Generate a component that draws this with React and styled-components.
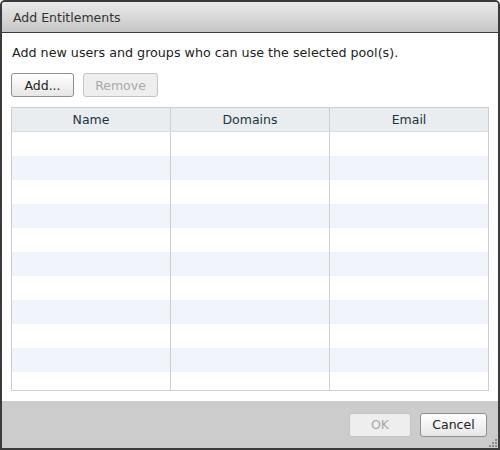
import React from "react"
import styled, { createGlobalStyle } from "styled-components"

const GlobalStyle = createGlobalStyle`
  html, body {
    margin: 0;
    padding: 0;
    background: #fff;
  }
  body {
    font-family: "DejaVu Sans", Verdana, sans-serif;
    font-size: 12px;
    color: #222;
  }
`

const columns = ["Name", "Domains", "Email"]
const rows = Array.from({ length: 11 })

const App = () => {
  return (
    <>
      <GlobalStyle />
      <Dialog>
        <TitleBar>Add Entitlements</TitleBar>
        <Body>
          <Description>Add new users and groups who can use the selected pool(s).</Description>
          <Toolbar>
            <Button $width={63}>Add...</Button>
            <Button disabled $width={75}>Remove</Button>
          </Toolbar>
          <Table>
            <HeaderRow>
              {columns.map((c) => (
                <HeaderCell key={c}>{c}</HeaderCell>
              ))}
            </HeaderRow>
            <RowList>
              {rows.map((_, i) => (
                <Row key={i} $striped={i % 2 === 1}>
                  {columns.map((c) => (
                    <Cell key={c} />
                  ))}
                </Row>
              ))}
            </RowList>
          </Table>
        </Body>
        <Footer>
          <Button disabled $width={62}>OK</Button>
          <Button $width={67}>Cancel</Button>
          <Grip width="10" height="10" viewBox="0 0 10 10">
            <rect x="7" y="1" width="2" height="2" fill="#8a8a8a" />
            <rect x="4" y="4" width="2" height="2" fill="#8a8a8a" />
            <rect x="7" y="4" width="2" height="2" fill="#8a8a8a" />
            <rect x="1" y="7" width="2" height="2" fill="#8a8a8a" />
            <rect x="4" y="7" width="2" height="2" fill="#8a8a8a" />
            <rect x="7" y="7" width="2" height="2" fill="#8a8a8a" />
          </Grip>
        </Footer>
      </Dialog>
    </>
  )
}

export default App

const Dialog = styled.div`
  position: relative;
  box-sizing: border-box;
  width: 500px;
  height: 450px;
  display: flex;
  flex-direction: column;
  border: 2px solid #3b3b3b;
  border-radius: 5px 5px 0 0;
  background: #fff;
  overflow: hidden;
`

const TitleBar = styled.div`
  height: 30px;
  flex: none;
  display: flex;
  align-items: center;
  padding-left: 11px;
  background: linear-gradient(#eaeaea, #c6c6c6);
  border-bottom: 1px solid #3b3b3b;
  color: #333;
  font-size: 12.5px;
`

const Body = styled.div`
  flex: 1;
  display: flex;
  flex-direction: column;
  padding: 0 9px 10px;
  min-height: 0;
`

const Description = styled.div`
  padding: 11px 1px 0 1px;
  height: 18px;
  line-height: 18px;
  font-size: 12.7px;
  color: #222;
`

const Toolbar = styled.div`
  display: flex;
  gap: 9px;
  margin-top: 11px;
`

const Button = styled.button`
  box-sizing: border-box;
  height: 24px;
  width: ${(p) => (p.$width ? `${p.$width}px` : "auto")};
  padding: 0;
  font-family: "DejaVu Sans", Verdana, sans-serif;
  font-size: 12.5px;
  color: ${(p) => (p.disabled ? "#a9a9a9" : "#222")};
  background: ${(p) =>
    p.disabled ? "#eeeeee" : "linear-gradient(#ffffff, #e6e6e6)"};
  border: 1px solid ${(p) => (p.disabled ? "#c4c4c4" : "#8f8f8f")};
  border-radius: 3px;
`

const Table = styled.div`
  flex: 1;
  margin-top: 10px;
  display: flex;
  flex-direction: column;
  border: 1px solid #cfcfcf;
  min-height: 0;
  overflow: hidden;
`

const HeaderRow = styled.div`
  display: grid;
  grid-template-columns: 158px 159px 1fr;
  height: 23px;
  flex: none;
  background: #e9edf0;
  border-bottom: 1px solid #d8dcdf;
`

const HeaderCell = styled.div`
  display: flex;
  align-items: center;
  justify-content: center;
  font-size: 12.5px;
  color: #1d3440;
  border-left: 1px solid #cfcfcf;
  &:first-child {
    border-left: none;
  }
`

const RowList = styled.div`
  flex: 1;
  overflow: hidden;
`

const Row = styled.div`
  display: grid;
  grid-template-columns: 158px 159px 1fr;
  height: 24px;
  background: ${(p) => (p.$striped ? "#f1f5fb" : "#ffffff")};
`

const Cell = styled.div`
  border-left: 1px solid #cfcfcf;
  &:first-child {
    border-left: none;
  }
`

const Footer = styled.div`
  height: 47px;
  flex: none;
  display: flex;
  align-items: center;
  justify-content: flex-end;
  gap: 9px;
  padding-right: 11px;
  background: #cccccc;
`

const Grip = styled.svg`
  position: absolute;
  right: 0;
  bottom: 0;
`
